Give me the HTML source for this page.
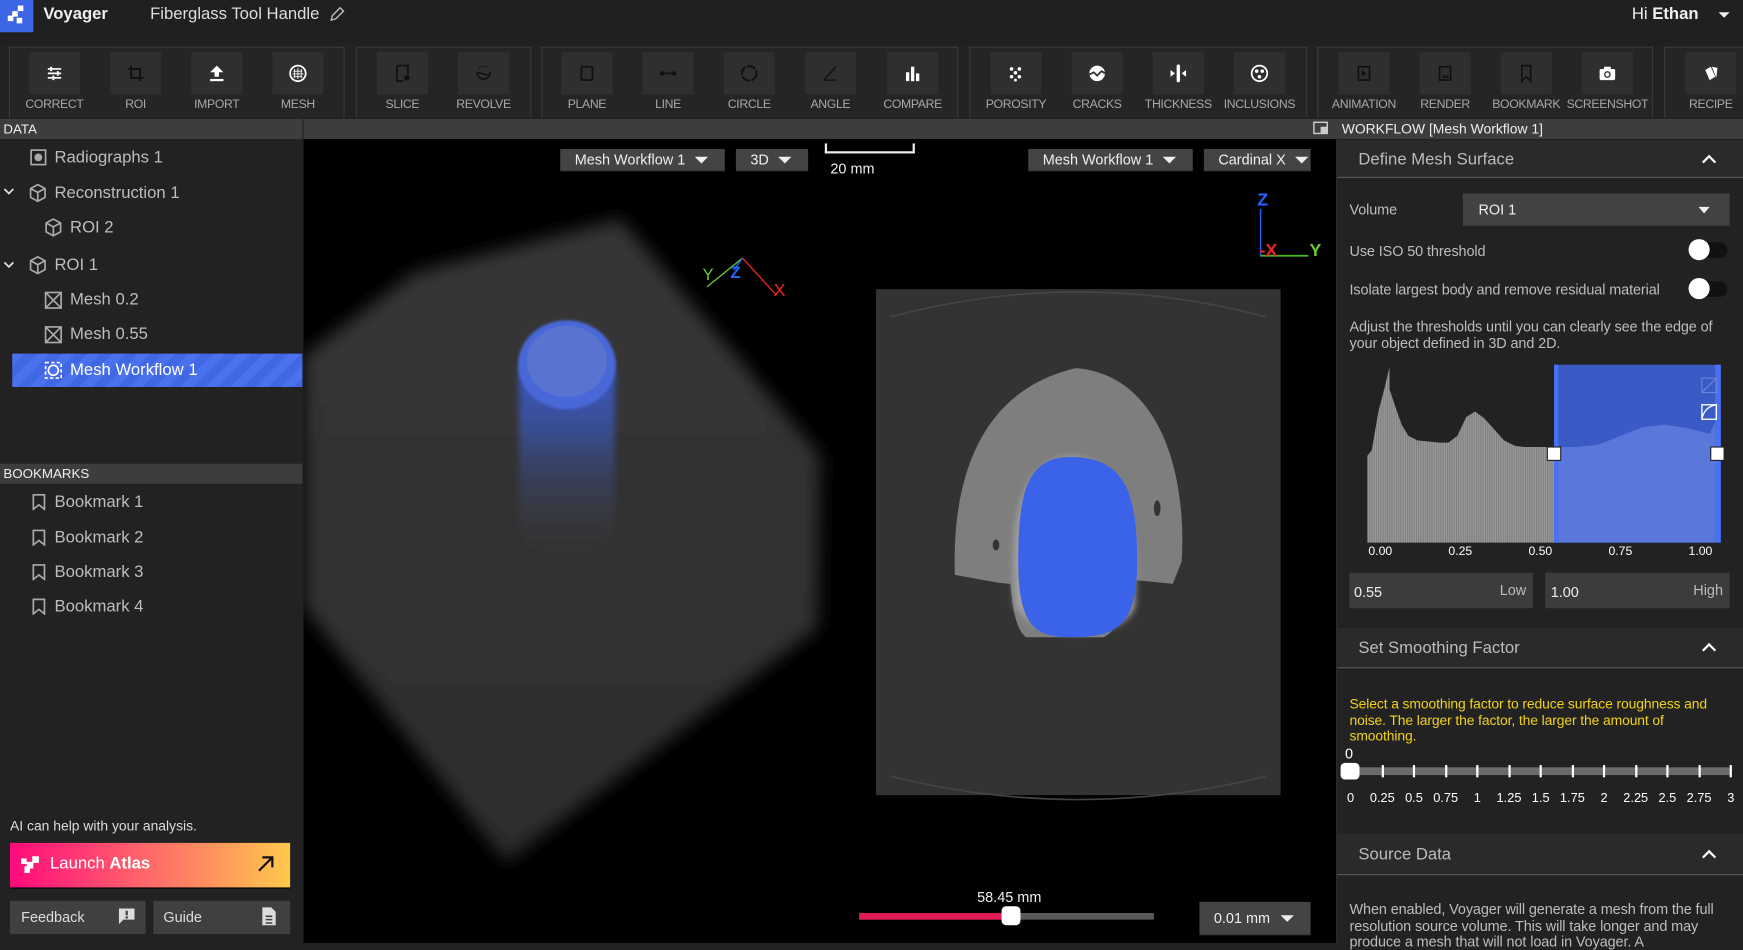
<!DOCTYPE html>
<html><head><meta charset="utf-8">
<style>
*{box-sizing:border-box;margin:0;padding:0}
html,body{width:1743px;height:943px;overflow:hidden;background:#222}
#w{position:absolute;left:0;top:0;width:1568px;height:848px;transform:scale(1.11161,1.11203);transform-origin:0 0;font-family:"Liberation Sans",sans-serif;color:#ccc;background:#222}
.a{position:absolute}
.grp{position:absolute;top:42px;height:64px;border:1px solid #3a3a3a;border-bottom:none;background:#252525}
.btn{position:absolute;top:47px;width:46px;height:38px;background:#2f2f2f;display:flex;align-items:center;justify-content:center}
.lbl{position:absolute;top:88px;width:80px;text-align:center;font-size:11px;color:#a8a8a8;letter-spacing:-0.3px}
.item{position:absolute;font-size:15px;color:#bdbdbd;height:20px;line-height:20px}
.dd{position:absolute;background:#444;color:#eee;font-size:13px;height:20px;line-height:20px;padding-left:13px;border-bottom:1px solid #333}
.tri{position:absolute;width:0;height:0;border-left:6px solid transparent;border-right:6px solid transparent;border-top:6px solid #eee}
.sec{position:absolute;left:1203px;width:365px;background:#2a2a2a;border-bottom:1px solid #5a5a5a;font-size:15px;color:#bbb}
.chev{position:absolute;right:26px;width:9px;height:9px;border-left:2px solid #fff;border-top:2px solid #fff;transform:rotate(45deg)}
.t13{font-size:13px;color:#bdbdbd;position:absolute;letter-spacing:-0.1px}
</style></head><body><div id="w">
<div class="a" style="left:0;top:0;width:1568px;height:40px;background:#202020"></div>
<div class="a" style="left:0;top:0;width:30px;height:29px;background:#3c66e6"></div>
<svg class="a" style="left:5px;top:4px" width="20" height="20" viewBox="0 0 20 20" fill="#fff"><rect x="11" y="1" width="5" height="5"/><rect x="6" y="6" width="5" height="5"/><rect x="2" y="10" width="5" height="5"/><rect x="10" y="12" width="5" height="5"/></svg>
<div class="a" style="left:39px;top:4px;font-size:15px;font-weight:bold;color:#eee">Voyager</div>
<div class="a" style="left:135px;top:4px;font-size:15px;color:#ddd">Fiberglass Tool Handle</div>
<svg class="a" style="left:296px;top:5px" width="15" height="15" viewBox="0 0 15 15"><path d="M2 13l1-4 7-7 3 3-7 7z" fill="none" stroke="#bbb" stroke-width="1.3"/></svg>
<div class="a" style="left:1468px;top:4px;font-size:15px;color:#eee">Hi <b>Ethan</b></div>
<div class="tri" style="left:1546px;top:11px;border-left-width:5px;border-right-width:5px;border-top-width:5px"></div>

<div class="grp" style="left:8px;width:302px"></div>
<div class="grp" style="left:320px;width:158px"></div>
<div class="grp" style="left:487px;width:375px"></div>
<div class="grp" style="left:872px;width:304px"></div>
<div class="grp" style="left:1185px;width:302px"></div>
<div class="grp" style="left:1497px;width:80px"></div>
<div id="tb"></div>

<div class="a" style="left:0;top:107px;width:272px;height:18px;background:#3d3d3d;font-size:12px;color:#eee;padding-left:3px;line-height:18px">DATA</div>
<div class="a" style="left:273px;top:107px;width:930px;height:18px;background:#3d3d3d"></div>
<svg class="a" style="left:1181px;top:109px" width="14" height="12"><rect x="1" y="1" width="12" height="10" fill="none" stroke="#ccc" stroke-width="1.3"/><rect x="7" y="5" width="6" height="6" fill="#ccc"/></svg>
<div class="a" style="left:1203px;top:107px;width:365px;height:18px;background:#3d3d3d;font-size:12.5px;color:#eee;padding-left:4px;line-height:18px">WORKFLOW [Mesh Workflow 1]</div>

<div class="a" style="left:0;top:125px;width:272px;height:723px;background:#222"></div>
<svg class="a" style="left:27px;top:134px" width="15" height="15"><rect x="1" y="1" width="13" height="13" fill="none" stroke="#aaa" stroke-width="1.5"/><circle cx="7.5" cy="7.5" r="3.5" fill="#aaa"/></svg>
<div class="item" style="left:49px;top:132px">Radiographs 1</div>
<svg class="a" style="left:3px;top:169px" width="10" height="8"><path d="M1 1l4 4 4-4" fill="none" stroke="#ddd" stroke-width="1.6"/></svg>
<svg class="a" style="left:26px;top:165px" width="16" height="17"><path d="M8 1l6.5 3.5v8L8 16l-6.5-3.5v-8z M1.5 4.5L8 8l6.5-3.5M8 8v8" fill="none" stroke="#aaa" stroke-width="1.5"/></svg>
<div class="item" style="left:49px;top:164px">Reconstruction 1</div>
<svg class="a" style="left:40px;top:196px" width="16" height="17"><path d="M8 1l6.5 3.5v8L8 16l-6.5-3.5v-8z M1.5 4.5L8 8l6.5-3.5M8 8v8" fill="none" stroke="#aaa" stroke-width="1.5"/></svg>
<div class="item" style="left:63px;top:195px">ROI 2</div>
<svg class="a" style="left:3px;top:235px" width="10" height="8"><path d="M1 1l4 4 4-4" fill="none" stroke="#ddd" stroke-width="1.6"/></svg>
<svg class="a" style="left:26px;top:230px" width="16" height="17"><path d="M8 1l6.5 3.5v8L8 16l-6.5-3.5v-8z M1.5 4.5L8 8l6.5-3.5M8 8v8" fill="none" stroke="#aaa" stroke-width="1.5"/></svg>
<div class="item" style="left:49px;top:229px">ROI 1</div>
<svg class="a" style="left:40px;top:262px" width="16" height="16"><rect x="1" y="1" width="14" height="14" fill="none" stroke="#aaa" stroke-width="1.5"/><path d="M1 1l14 14M15 1L1 15" stroke="#aaa" stroke-width="1.5"/></svg>
<div class="item" style="left:63px;top:260px">Mesh 0.2</div>
<svg class="a" style="left:40px;top:293px" width="16" height="16"><rect x="1" y="1" width="14" height="14" fill="none" stroke="#aaa" stroke-width="1.5"/><path d="M1 1l14 14M15 1L1 15" stroke="#aaa" stroke-width="1.5"/></svg>
<div class="item" style="left:63px;top:291px">Mesh 0.55</div>
<div class="a" style="left:11px;top:318px;width:261px;height:30px;background:repeating-linear-gradient(135deg,#4a72ee 0 8px,#4067e4 8px 16px)"></div>
<svg class="a" style="left:40px;top:325px" width="16" height="16"><rect x="1" y="1" width="14" height="14" fill="none" stroke="#fff" stroke-width="1.5" stroke-dasharray="3 2"/><circle cx="8" cy="8" r="4.5" fill="none" stroke="#fff" stroke-width="1.5"/></svg>
<div class="item" style="left:63px;top:323px;color:#fff">Mesh Workflow 1</div>

<div class="a" style="left:0;top:417px;width:272px;height:18px;background:#3d3d3d;font-size:12px;color:#eee;padding-left:3px;line-height:18px">BOOKMARKS</div>
<div id="bm"></div>

<div class="a" style="left:9px;top:736px;font-size:12.5px;color:#ddd">AI can help with your analysis.</div>
<div class="a" style="left:9px;top:758px;width:252px;height:40px;background:linear-gradient(90deg,#ff0a7a,#ff6a6a 50%,#ffc84c);box-shadow:0 1px 0 #000"></div>
<svg class="a" style="left:18px;top:769px" width="19" height="18" fill="#fff"><rect x="11" y="1" width="6" height="6"/><rect x="6" y="6" width="6" height="6"/><rect x="1" y="3" width="5" height="5"/><rect x="4" y="10" width="5" height="6"/></svg>
<div class="a" style="left:45px;top:768px;font-size:15px;color:#fff">Launch <b>Atlas</b></div>
<svg class="a" style="left:230px;top:768px" width="18" height="18"><path d="M3 15L15 3M6 3h9v9" fill="none" stroke="#111" stroke-width="2"/></svg>
<div class="a" style="left:9px;top:810px;width:122px;height:30px;background:#404040;font-size:13px;color:#ddd;padding:7px 0 0 10px">Feedback</div>
<svg class="a" style="left:106px;top:816px" width="16" height="16"><path d="M1 1h14v10H5l-4 4z" fill="#ddd"/><rect x="7" y="3" width="2" height="4" fill="#404040"/><rect x="7" y="8" width="2" height="2" fill="#404040"/></svg>
<div class="a" style="left:138px;top:810px;width:123px;height:30px;background:#404040;font-size:13px;color:#ddd;padding:7px 0 0 9px">Guide</div>
<svg class="a" style="left:235px;top:815px" width="14" height="18"><path d="M1 1h8l4 4v12H1z" fill="#ddd"/><path d="M4 9h6M4 12h6M4 15h6" stroke="#404040" stroke-width="1.4"/></svg>

<div class="a" style="left:273px;top:125px;width:929px;height:723px;background:#000;overflow:hidden">
<svg width="929" height="723" style="position:absolute;left:0;top:0">
<defs>
<filter id="b1" x="-20%" y="-20%" width="140%" height="140%"><feGaussianBlur stdDeviation="8"/></filter>
<filter id="b2"><feGaussianBlur stdDeviation="3"/></filter>
<filter id="b3"><feGaussianBlur stdDeviation="1.2"/></filter>
<linearGradient id="gd" x1="0" y1="0" x2="0" y2="1"><stop offset="0" stop-color="#363636"/><stop offset="0.5" stop-color="#323232"/><stop offset="1" stop-color="#2c2c2c"/></linearGradient>
<linearGradient id="cy" x1="0" y1="0" x2="0" y2="1"><stop offset="0" stop-color="#3e5fe0"/><stop offset="0.4" stop-color="#3a55b0" stop-opacity="0.75"/><stop offset="1" stop-color="#444" stop-opacity="0"/></linearGradient>
</defs>
<polygon points="0,195 100,120 285,72 465,285 462,440 182,650 0,420" fill="url(#gd)" filter="url(#b1)"/>
<rect x="194" y="185" width="86" height="190" rx="30" fill="url(#cy)" filter="url(#b2)"/>
<ellipse cx="237" cy="203" rx="44" ry="40" fill="#4a68d8" filter="url(#b3)"/>
<ellipse cx="237" cy="200" rx="36" ry="32" fill="#6a7fc8" opacity="0.5"/>
<path d="M395 107L363 133" stroke="#6c3" stroke-width="1.2"/><path d="M395 107L387 118" stroke="#26f" stroke-width="1.2"/><path d="M395 107L425 140" stroke="#e22" stroke-width="1.2"/>
<text x="359" y="127" fill="#6c3" font-size="15" font-family="Liberation Sans">Y</text>
<text x="384" y="125" fill="#26f" font-size="15" font-family="Liberation Sans" font-weight="bold">Z</text>
<text x="423" y="141" fill="#e22" font-size="16" font-family="Liberation Sans">X</text>
<path d="M861 63V105H904" fill="none" stroke="#26f" stroke-width="1.2"/><path d="M861 105H904" stroke="#4b2" stroke-width="1.5"/>
<text x="858" y="60" fill="#26f" font-size="16" font-family="Liberation Sans" font-weight="bold">Z</text>
<text x="860" y="105" fill="#e22" font-size="16" font-family="Liberation Sans" font-weight="bold">-X</text>
<text x="905" y="105" fill="#6c3" font-size="16" font-family="Liberation Sans" font-weight="bold">Y</text>
<rect x="515" y="135" width="364" height="455" fill="#333"/>
<path d="M528 160 Q697 115 866 160" fill="none" stroke="#444" stroke-width="1.5"/>
<path d="M528 573 Q697 615 866 573" fill="none" stroke="#444" stroke-width="1.5"/>
<path d="M586 392 C583 300 612 225 695 206 C770 212 795 300 790 380 L782 400 L742 396 C738 420 735 440 720 448 L650 448 C640 440 638 420 636 400 L625 399 Z" fill="#7e7e7e"/>
<path d="M640 420 C633 330 650 290 690 285 C730 288 752 330 748 420 C740 450 660 455 640 420Z" fill="#a0a0a0" filter="url(#b2)"/>
<path d="M690 286 C650 286 643 320 643 380 C643 440 660 448 690 448 C730 448 750 440 750 380 C750 320 740 286 690 286Z" fill="#3b63ea"/>
<ellipse cx="768" cy="332" rx="3" ry="7" fill="#333"/><ellipse cx="623" cy="365" rx="3" ry="5" fill="#333"/>
</svg>
<div class="dd" style="left:231px;top:9px;width:148px">Mesh Workflow 1</div><div class="tri" style="left:352px;top:16px"></div>
<div class="dd" style="left:389px;top:9px;width:65px">3D</div><div class="tri" style="left:427px;top:16px"></div>
<div class="a" style="left:469px;top:4px;width:81px;height:9px;border:2px solid #eee;border-top:none"></div>
<div class="a" style="left:474px;top:19px;font-size:13px;color:#eee">20 mm</div>
<div class="dd" style="left:652px;top:9px;width:148px">Mesh Workflow 1</div><div class="tri" style="left:773px;top:16px"></div>
<div class="dd" style="left:810px;top:9px;width:96px">Cardinal X</div><div class="tri" style="left:892px;top:16px"></div>
<div class="a" style="left:606px;top:674px;font-size:13px;color:#eee">58.45 mm</div>
<div class="a" style="left:500px;top:696px;width:265px;height:6px;background:#5a5a5a"></div>
<div class="a" style="left:500px;top:696px;width:137px;height:6px;background:#e31b54"></div>
<div class="a" style="left:628px;top:690px;width:17px;height:17px;background:#fff;border-radius:4px"></div>
<div class="dd" style="left:806px;top:686px;width:100px;height:30px;line-height:30px">0.01 mm</div><div class="tri" style="left:879px;top:698px"></div>
</div>

<div class="a" style="left:1202px;top:125px;width:366px;height:723px;background:#222;border-left:1px solid #2c2c2c"></div>
<div class="sec" style="top:126px;height:34px;padding:9px 0 0 19px">Define Mesh Surface<div class="chev" style="top:15px"></div></div>
<div class="t13" style="left:1214px;top:181px">Volume</div>
<div class="a" style="left:1316px;top:174px;width:240px;height:29px;background:#424242;font-size:13px;color:#eee;padding:7px 0 0 14px">ROI 1</div>
<div class="tri" style="left:1528px;top:186px;border-left-width:5px;border-right-width:5px;border-top-width:6px"></div>
<div class="t13" style="left:1214px;top:218px">Use ISO 50 threshold</div>
<div class="a" style="left:1520px;top:218px;width:34px;height:14px;border-radius:7px;background:#111"></div>
<div class="a" style="left:1519px;top:215px;width:19px;height:19px;border-radius:50%;background:#fff"></div>
<div class="t13" style="left:1214px;top:253px">Isolate largest body and remove residual material</div>
<div class="a" style="left:1520px;top:253px;width:34px;height:14px;border-radius:7px;background:#111"></div>
<div class="a" style="left:1519px;top:250px;width:19px;height:19px;border-radius:50%;background:#fff"></div>
<div class="t13" style="left:1214px;top:287px;width:345px;line-height:14.5px">Adjust the thresholds until you can clearly see the edge of your object defined in 3D and 2D.</div>
<svg class="a" style="left:1203px;top:320px" width="365" height="190">
<defs><pattern id="st" width="2" height="10" patternUnits="userSpaceOnUse"><rect width="1" height="10" fill="#9c9c9c"/><rect x="1" width="1" height="10" fill="#8a8a8a"/></pattern></defs>
<rect x="195" y="8" width="150" height="160" fill="#3a5bc6"/>
<path d="M27 168V90L31 85 37 50 43 27 47 10 47 30 52 45 58 62 64 72 72 76 82 77 92 78 100 78 108 72 116 55 124 50 132 56 142 67 150 76 160 81 168 82 195 82V168Z" fill="url(#st)"/>
<path d="M195 168V82L215 82 235 80 255 72 275 64 295 62 315 65 335 70 340 60 340 168Z" fill="#5a78dc"/>
<rect x="195" y="8" width="4" height="160" fill="#4a70f5"/><rect x="340" y="8" width="5" height="160" fill="#4a70f5"/>
<rect x="328" y="20" width="13" height="13" fill="none" stroke="#6a86dd" stroke-width="1"/><path d="M328 33L341 20" stroke="#6a86dd"/>
<rect x="328" y="44" width="13" height="13" fill="none" stroke="#fff" stroke-width="1.2"/><path d="M328 57Q330 46 341 44" fill="none" stroke="#fff" stroke-width="1.2"/>
<rect x="189" y="82" width="12" height="12" fill="#fff" stroke="#222"/><rect x="336" y="82" width="12" height="12" fill="#fff" stroke="#222"/>
<g font-family="Liberation Sans" font-size="11" fill="#fff"><text x="28" y="179">0.00</text><text x="100" y="179">0.25</text><text x="172" y="179">0.50</text><text x="244" y="179">0.75</text><text x="316" y="179">1.00</text></g>
</svg>
<div class="a" style="left:1214px;top:515px;width:165px;height:32px;background:#3c3c3c;font-size:13px;color:#eee;padding:10px 0 0 4px">0.55<span style="position:absolute;right:6px;top:8px;color:#bbb">Low</span></div>
<div class="a" style="left:1390px;top:515px;width:166px;height:32px;background:#3c3c3c;font-size:13px;color:#eee;padding:10px 0 0 5px">1.00<span style="position:absolute;right:6px;top:8px;color:#bbb">High</span></div>
<div class="sec" style="top:565px;height:36px;padding:9px 0 0 19px">Set Smoothing Factor<div class="chev" style="top:15px"></div></div>
<div class="a" style="left:1214px;top:626px;width:345px;font-size:12.5px;line-height:14.5px;color:#f2d21a;letter-spacing:-0.1px">Select a smoothing factor to reduce surface roughness and noise. The larger the factor, the larger the amount of smoothing.</div>
<div class="a" style="left:1210px;top:670px;font-size:13px;color:#fff">0</div>
<div class="a" style="left:1214px;top:690px;width:343px;height:7px;background:#6a6a6a"></div>
<div id="tk"></div>
<div class="a" style="left:1206px;top:686px;width:17px;height:15px;background:#fff;border-radius:4px"></div>
<div class="sec" style="top:750px;height:37px;padding:10px 0 0 19px">Source Data<div class="chev" style="top:16px"></div></div>
<div class="t13" style="left:1214px;top:811px;width:342px;line-height:14.5px">When enabled, Voyager will generate a mesh from the full resolution source volume. This will take longer and may produce a mesh that will not load in Voyager. A</div>
</div>
<script>
var W='#fff',D='#111';
var ic={
CORRECT:'<path d="M3 5h12M3 9h12M3 13h12" stroke="#fff" stroke-width="1.5"/><path d="M6 3v4M12 7v4M8 11v4" stroke="#fff" stroke-width="1.8"/>',
ROI:'<path d="M5 2v11h11M2 5h11v11" fill="none" stroke="#111" stroke-width="1.8"/>',
IMPORT:'<path d="M9 2l-6 6h4v4h4V8h4z" fill="#fff"/><rect x="3" y="14" width="12" height="2" fill="#fff"/>',
MESH:'<circle cx="9" cy="9" r="7" fill="none" stroke="#fff" stroke-width="1.6"/><path d="M6 5v8M9 4v10M12 5v8M5 7h8M4 9.5h10M5 12h8" stroke="#fff" stroke-width="0.8"/>',
SLICE:'<path d="M4 2h10v8M4 2v14h6" fill="none" stroke="#111" stroke-width="1.6"/><circle cx="13" cy="13" r="2.5" fill="#111"/>',
REVOLVE:'<path d="M3 8a6 6 0 0 0 12 0" fill="none" stroke="#111" stroke-width="1.6"/><path d="M3 8L15 11" stroke="#111" stroke-width="1.3"/><path d="M5 4a6 6 0 0 1 8 0" fill="none" stroke="#111" stroke-width="1.2" stroke-dasharray="1.5 1.5"/>',
PLANE:'<rect x="4" y="3" width="10" height="12" rx="1" fill="none" stroke="#111" stroke-width="1.6"/>',
LINE:'<path d="M3 9h12" stroke="#111" stroke-width="1.6"/><circle cx="3.5" cy="9" r="2" fill="#111"/><circle cx="14.5" cy="9" r="2" fill="#111"/>',
CIRCLE:'<circle cx="9" cy="9" r="6.5" fill="none" stroke="#111" stroke-width="2" stroke-dasharray="8 1.5"/>',
ANGLE:'<path d="M3 15h12M3 15L14 3" fill="none" stroke="#111" stroke-width="1.3"/>',
COMPARE:'<rect x="3" y="8" width="3" height="8" fill="#fff"/><rect x="7.5" y="3" width="3" height="13" fill="#fff"/><rect x="12" y="9" width="3" height="7" fill="#fff"/>',
POROSITY:'<g fill="#fff"><circle cx="5" cy="5" r="1.6"/><circle cx="12" cy="5" r="1.6"/><circle cx="8.5" cy="8.5" r="1.6"/><circle cx="5" cy="12" r="1.6"/><circle cx="12" cy="12" r="1.6"/><circle cx="8.5" cy="15" r="1.3"/></g>',
CRACKS:'<circle cx="9" cy="9" r="7" fill="#fff"/><path d="M2 10l4-2 3 3 4-4 3 2" fill="none" stroke="#2f2f2f" stroke-width="1.6"/>',
THICKNESS:'<rect x="7.5" y="1" width="3" height="16" rx="1.5" fill="#fff"/><path d="M2 6l4 3-4 3zM16 6l-4 3 4 3z" fill="#fff"/>',
INCLUSIONS:'<circle cx="9" cy="9" r="7" fill="none" stroke="#fff" stroke-width="1.6"/><circle cx="6.5" cy="7" r="1.6" fill="#fff"/><circle cx="11.5" cy="7" r="1.6" fill="#fff"/><circle cx="9" cy="12" r="1.6" fill="#fff"/>',
ANIMATION:'<rect x="4" y="3" width="10" height="12" fill="none" stroke="#111" stroke-width="1.5"/><path d="M7 6l4 3-4 3z" fill="#111"/>',
RENDER:'<rect x="4" y="3" width="10" height="12" fill="none" stroke="#111" stroke-width="1.5"/><path d="M6 13l2-3 2 2 2-3v4z" fill="#111"/>',
BOOKMARK:'<path d="M5 2h8v14l-4-4-4 4z" fill="none" stroke="#111" stroke-width="1.5"/>',
SCREENSHOT:'<rect x="2" y="5" width="14" height="10" rx="1.5" fill="#fff"/><rect x="6" y="3" width="6" height="3" fill="#fff"/><circle cx="9" cy="10" r="3" fill="#2f2f2f"/><circle cx="9" cy="10" r="1.8" fill="#fff"/>',
RECIPE:'<path d="M4 6l5-3 4 9-5 3z" fill="#fff"/><path d="M10 3l5 1-1 9z" fill="#fff"/>'};
var tb=[["CORRECT",49],["ROI",122],["IMPORT",195],["MESH",268],["SLICE",362],["REVOLVE",435],["PLANE",528],["LINE",601],["CIRCLE",674],["ANGLE",747],["COMPARE",821],["POROSITY",914],["CRACKS",987],["THICKNESS",1060],["INCLUSIONS",1133],["ANIMATION",1227],["RENDER",1300],["BOOKMARK",1373],["SCREENSHOT",1446],["RECIPE",1539]];
var h="";
tb.forEach(function(t){h+='<div class="btn" style="left:'+(t[1]-23)+'px"><svg width="18" height="18" viewBox="0 0 18 18">'+ic[t[0]]+'</svg></div><div class="lbl" style="left:'+(t[1]-40)+'px">'+t[0]+'</div>';});
document.getElementById("tb").innerHTML=h;
var b="";[451,483,514,545].forEach(function(y,i){b+='<svg class="a" style="left:29px;top:'+(y-7)+'px" width="12" height="15"><path d="M1 1h10v13l-5-4-5 4z" fill="none" stroke="#aaa" stroke-width="1.5"/></svg><div class="item" style="left:49px;top:'+(y-9)+'px">Bookmark '+(i+1)+'</div>';});
document.getElementById("bm").innerHTML=b;
var k="",L=["0","0.25","0.5","0.75","1","1.25","1.5","1.75","2","2.25","2.5","2.75","3"];
L.forEach(function(s,i){var x=1214+i*28.5;k+='<div class="a" style="left:'+x+'px;top:688px;width:2px;height:11px;background:#fff"></div><div class="a" style="left:'+(x-20)+'px;top:712px;width:42px;text-align:center;font-size:11.5px;color:#fff">'+s+'</div>';});
document.getElementById("tk").innerHTML=k;
</script>
</body></html>
